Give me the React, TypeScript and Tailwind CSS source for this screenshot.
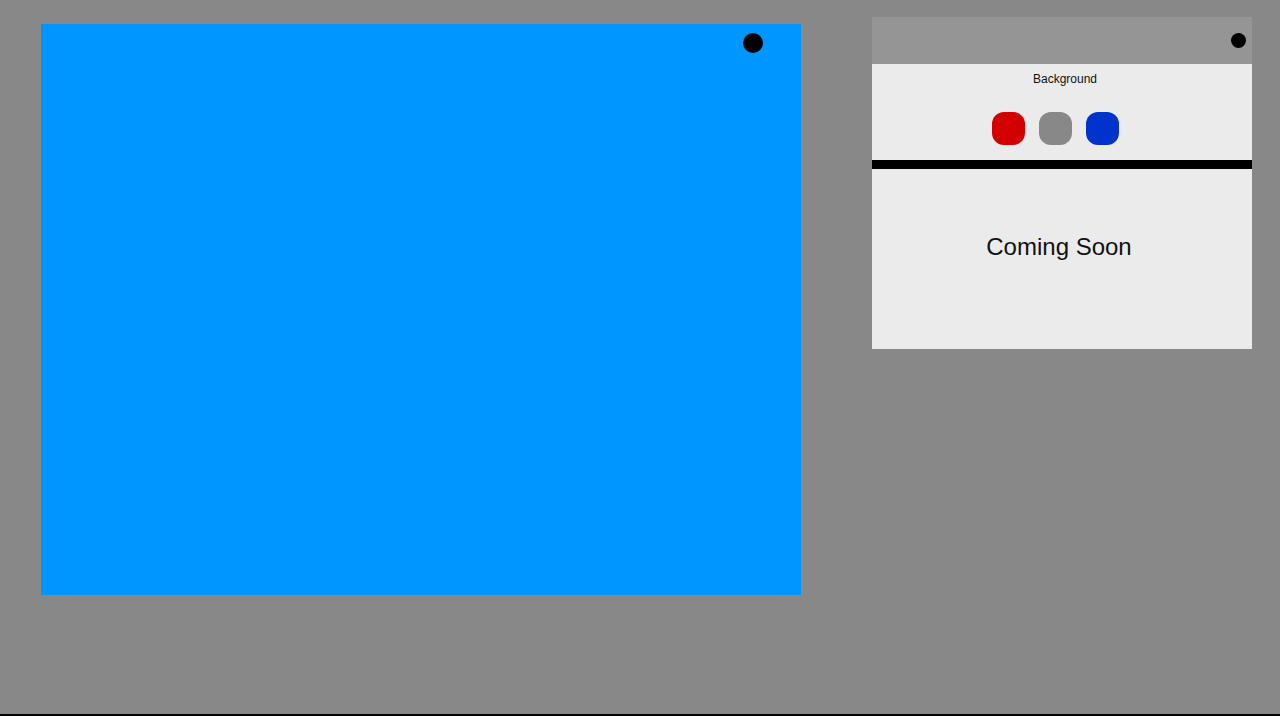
const swatches = ['bg-[#d20000]', 'bg-[#888888]', 'bg-[#0033cc]'];

export default function App() {
  return (
    <div className="h-[716px] w-full overflow-hidden border-b-2 border-black bg-[#888888] font-['Liberation_Sans',Arial,sans-serif]">
      <div className="flex items-start pl-[41px]">
        {/* canvas */}
        <div className="mt-[24px] flex h-[571px] w-[760px] items-start justify-end bg-[#0096ff] pr-[38px] pt-[9px]">
          <span className="h-[20px] w-[20px] rounded-full bg-black" />
        </div>

        {/* side panel */}
        <div className="ml-[71px] mt-[17px] w-[380px] bg-[#ebebeb]">
          <div className="flex h-[47px] items-center justify-end bg-[#959595] pr-[6px]">
            <span className="h-[15px] w-[15px] rounded-full bg-black" />
          </div>
          <div className="pl-[6px] pt-[8px] text-center text-[12px] leading-[14px] text-[#111]">
            Background
          </div>
          <div className="mt-[26px] flex justify-center gap-[14px] pr-[14px]">
            {swatches.map((c) => (
              <button
                key={c}
                type="button"
                className={'h-[33px] w-[33px] rounded-[12px] ' + c}
              />
            ))}
          </div>
          <div className="mt-[15px] h-[9px] bg-black" />
          <div className="h-[180px] pr-[6px] pt-[64px] text-center text-[24px] leading-[28px] text-[#111]">
            Coming Soon
          </div>
        </div>
      </div>
    </div>
  );
}
